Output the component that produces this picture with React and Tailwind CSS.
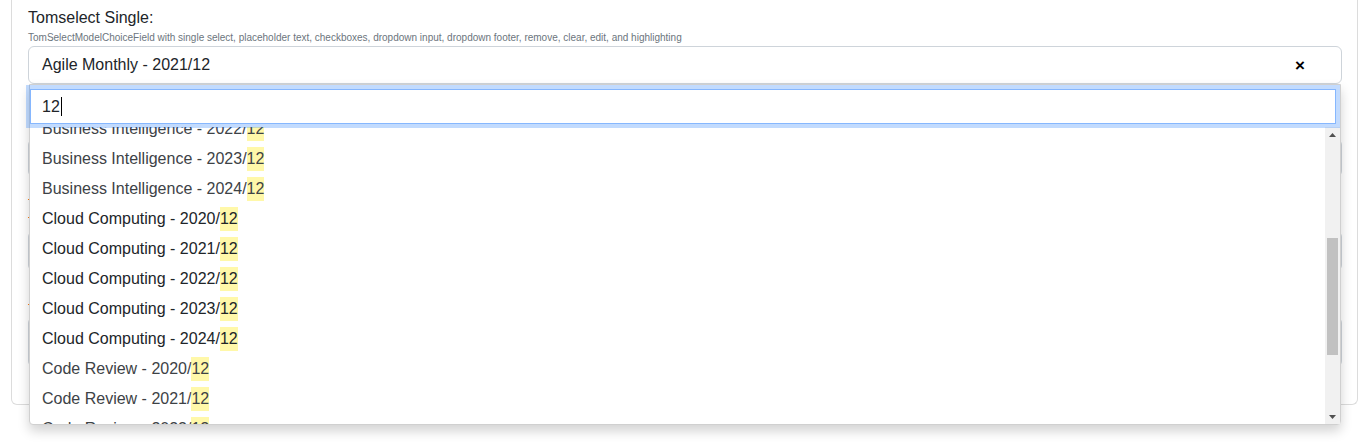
import React from "react";

const options = [
  { label: "Business Intelligence - 2022/", dark: false },
  { label: "Business Intelligence - 2023/", dark: false },
  { label: "Business Intelligence - 2024/", dark: false },
  { label: "Cloud Computing - 2020/", dark: true },
  { label: "Cloud Computing - 2021/", dark: true },
  { label: "Cloud Computing - 2022/", dark: true },
  { label: "Cloud Computing - 2023/", dark: true },
  { label: "Cloud Computing - 2024/", dark: true },
  { label: "Code Review - 2020/", dark: false },
  { label: "Code Review - 2021/", dark: false },
  { label: "Code Review - 2022/", dark: false },
];

function Arrow({ down }) {
  return (
    <svg width="7" height="4" viewBox="0 0 7 4" className={down ? "rotate-180" : ""}>
      <path d="M3.5 0 L7 4 L0 4 Z" fill="#505050" />
    </svg>
  );
}

export default function App() {
  return (
    <div className="h-[446px] w-full overflow-hidden bg-white font-['Liberation_Sans',Arial,sans-serif] text-[#212529]">
      <div className="mx-[11px] w-[1347px] rounded-b-md border-x border-b border-[#dcdcdc] pl-[16px] pr-[15px] pb-[37px]">
        <div className="pt-[6px] text-[16px] leading-6">Tomselect Single:</div>
        <div className="text-[10px] leading-[15px] text-[#6c757d]">
          TomSelectModelChoiceField with single select, placeholder text, checkboxes, dropdown input, dropdown footer, remove, clear, edit, and highlighting
        </div>

        {/* control + open dropdown */}
        <div className="relative mt-px">
          <div className="flex h-[38px] items-center rounded-md border border-[#ced4da] pl-[13px] pr-[36px]">
            <span className="flex-1 text-[16px]">Agile Monthly - 2021/12</span>
            <span className="text-[17px] font-bold leading-none text-black">×</span>
          </div>

          <div className="absolute left-px right-px top-full z-20 rounded-b-[4px] border border-[#d0d0d0] bg-white shadow-[0_6px_12px_rgba(0,0,0,0.175)]">
            <div className="relative z-10 pt-[4px] pb-[3px] pr-[4px]">
              <div className="flex h-[35px] items-center border border-[#86b7fe] bg-white pl-[11px] text-[16px] text-[#212529] shadow-[0_0_0_4px_rgba(13,110,253,0.25)]">
                <span>12</span>
                <span className="ml-px h-[19px] border-l border-black" />
              </div>
            </div>

            <div className="flex h-[297px]">
              <div className="flex-1 overflow-hidden">
                <div className="-mt-[13px]">
                  {options.map((o) => (
                    <div
                      key={o.label}
                      className={`flex h-[30px] items-center pl-[12px] text-[16px] ${o.dark ? "text-[#212529]" : "text-[#3d4246]"}`}
                    >
                      {o.label}
                      <span className="bg-[rgba(255,237,40,0.4)]">12</span>
                    </div>
                  ))}
                </div>
              </div>

              {/* scrollbar */}
              <div className="flex w-[15px] flex-col bg-[#f1f1f1]">
                <div className="flex h-[15px] items-center justify-center">
                  <Arrow />
                </div>
                <div className="flex-1 px-[2px] pt-[96px]">
                  <div className="h-[117px] bg-[#c1c1c1]" />
                </div>
                <div className="flex h-[15px] items-center justify-center">
                  <Arrow down />
                </div>
              </div>
            </div>
          </div>
        </div>

        {/* fields underneath the open dropdown */}
        <div className="mt-[55px] h-[38px] rounded-md border border-[#ced4da]" />
        <div className="mt-[22px] h-px w-[3px] bg-[#fd7e14]" />
        <div className="mt-[17px] h-px w-[3px] bg-[#fd7e14]" />
        <div className="mt-[13px] h-[40px] rounded-md border border-[#ced4da]" />
        <div className="mt-[33px] h-px w-[3px] bg-[#fd7e14]" />
        <div className="mt-[12px] h-[50px] rounded-md border border-[#ced4da]" />
      </div>
    </div>
  );
}
